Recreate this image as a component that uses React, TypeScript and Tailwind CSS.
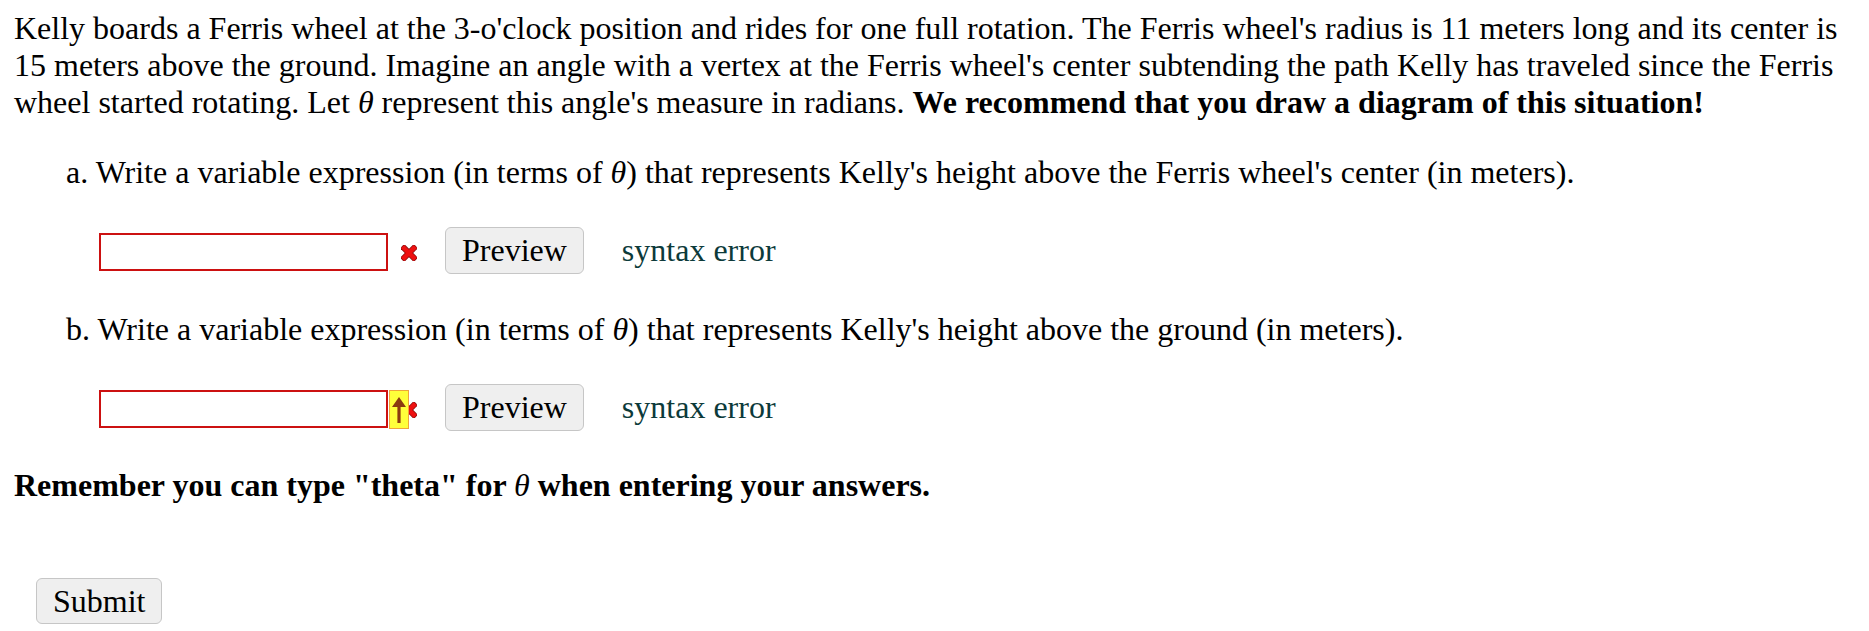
import React from "react";

function RedX({ className = "" }: { className?: string }) {
  return (
    <svg width="16" height="16" viewBox="0 0 16 16" className={className}>
      <g strokeLinecap="square">
        <line x1="3.2" y1="3.2" x2="12.8" y2="12.8" stroke="#8a1010" strokeWidth="6" />
        <line x1="12.8" y1="3.2" x2="3.2" y2="12.8" stroke="#8a1010" strokeWidth="6" />
        <line x1="3.2" y1="3.2" x2="12.8" y2="12.8" stroke="#ee1111" strokeWidth="4.4" />
        <line x1="12.8" y1="3.2" x2="3.2" y2="12.8" stroke="#ee1111" strokeWidth="4.4" />
      </g>
    </svg>
  );
}

function UpArrow() {
  return (
    <svg width="14" height="26" viewBox="0 0 14 26">
      <polygon points="7,0 14,10 8.6,10 8.6,26 5.4,26 5.4,10 0,10" fill="#8b3a10" />
    </svg>
  );
}

function AnswerRow({ withArrow }: { withArrow?: boolean }) {
  return (
    <div className="flex items-start h-[47px] ml-[85px]">
      <div className="relative flex items-start">
        <input
          type="text"
          className="w-[289px] h-[38px] mt-[6px] border-2 border-[#cc1111] bg-white outline-none"
        />
        <RedX className="ml-[13px] mt-[18px]" />
        {withArrow && (
          <div className="absolute left-[290px] top-[6px] w-[20px] h-[39px] bg-[#ffff3a] border border-[#efa63a] flex items-center justify-center">
            <UpArrow />
          </div>
        )}
      </div>
      <button className="ml-[28px] h-[47px] px-[16px] rounded-[6px] border-[1.5px] border-[#c6c6c6] bg-[#efefef] text-[32px] leading-[37px] text-black">
        Preview
      </button>
      <span className="ml-[38px] leading-[47px] text-[#0c3a3a]">syntax error</span>
    </div>
  );
}

export default function App() {
  return (
    <div className="min-h-screen bg-white text-black pl-[14px] pr-[12px] pt-[10px] font-['Liberation_Serif','Times_New_Roman',serif] text-[32px] leading-[37px]">
      <p>
        Kelly boards a Ferris wheel at the 3-o'clock position and rides for one full rotation. The Ferris wheel's
        radius is 11 meters long and its center is 15 meters above the ground. Imagine an angle with a vertex at the
        Ferris wheel's center subtending the path Kelly has traveled since the Ferris wheel started rotating. Let{" "}
        <i>θ</i> represent this angle's measure in radians.{" "}
        <b>We recommend that you draw a diagram of this situation!</b>
      </p>

      <p className="mt-[33px] ml-[52px]">
        a. Write a variable expression (in terms of <i>θ</i>) that represents Kelly's height above the Ferris wheel's
        center (in meters).
      </p>
      <div className="mt-[36px]">
        <AnswerRow />
      </div>

      <p className="mt-[37px] ml-[52px]">
        b. Write a variable expression (in terms of <i>θ</i>) that represents Kelly's height above the ground (in
        meters).
      </p>
      <div className="mt-[36px]">
        <AnswerRow withArrow />
      </div>

      <p className="mt-[36px] font-bold">
        Remember you can type "theta" for <i className="font-normal">θ</i> when entering your answers.
      </p>

      <button className="mt-[74px] ml-[22px] h-[46px] px-[16px] rounded-[6px] border-[1.5px] border-[#c6c6c6] bg-[#efefef] text-[32px] leading-[37px] text-black">
        Submit
      </button>
    </div>
  );
}
